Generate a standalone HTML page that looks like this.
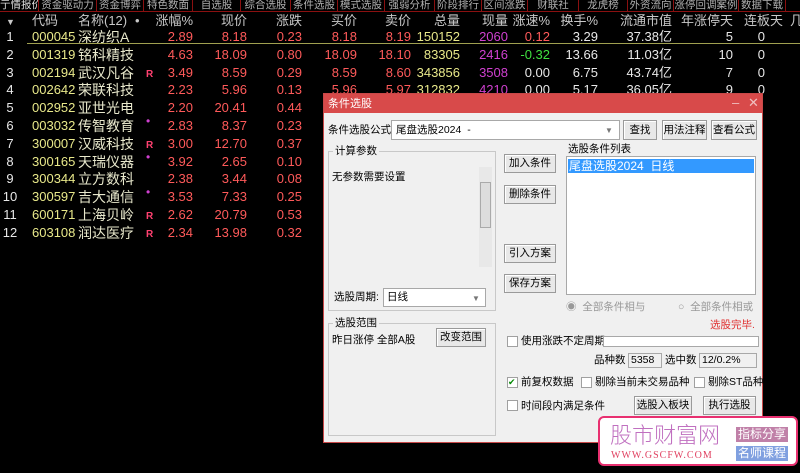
<!DOCTYPE html>
<html><head><meta charset="utf-8"><style>
*{margin:0;padding:0;box-sizing:border-box}
body{width:800px;height:473px;background:#000;overflow:hidden;position:relative;font-family:"Liberation Sans","Noto Sans CJK SC",sans-serif;font-size:13px}
.a{position:absolute;white-space:nowrap;line-height:16px}
.tab{position:absolute;top:0;height:11px;border-right:1px solid #8a1010;color:#b0b0b0;font-size:10.5px;line-height:10px;text-align:center;overflow:hidden;white-space:nowrap}
.h{position:absolute;top:12px;color:#c8c8c8;font-size:13px;line-height:18px;white-space:nowrap}
.r{text-align:right}
.y{color:#e8e88a}.n{color:#e8e8cc}.red{color:#ff5a5a}.w{color:#e8e8e8}.m{color:#d040d0}.g{color:#40e040}
.dlg{position:absolute;left:323px;top:93px;width:440px;height:350px;background:#f0f0f0;border:1px solid #c84848}
.dl{position:absolute;font-size:10.5px;line-height:13px;color:#000;white-space:nowrap}
.btn{position:absolute;background:#e8e8e8;border:1px solid #9a9a9a;box-shadow:inset 1px 1px #fff;font-size:10.5px;text-align:center;color:#000;white-space:nowrap;overflow:hidden}
.box{position:absolute;background:#fff;border:1px solid #a8a8a8}
.grp{position:absolute;border:1px solid #c8c8c8}
.cb{position:absolute;width:11px;height:11px;border:1px solid #a0a0a0;background:#fff}
</style></head><body>
<div class="tab" style="left:0;width:39px;color:#ddd">亍情报价</div>
<div class="tab" style="left:39px;width:58px">资金驱动力</div>
<div class="tab" style="left:97px;width:47px">资金博弈</div>
<div class="tab" style="left:144px;width:49px">特色数面</div>
<div class="tab" style="left:193px;width:48px">自选股</div>
<div class="tab" style="left:241px;width:50px">综合选股</div>
<div class="tab" style="left:291px;width:47px">条件选股</div>
<div class="tab" style="left:338px;width:47px">模式选股</div>
<div class="tab" style="left:385px;width:50px">强弱分析</div>
<div class="tab" style="left:435px;width:47px">阶段排行</div>
<div class="tab" style="left:482px;width:46px">区间涨跌</div>
<div class="tab" style="left:528px;width:51px">财联社</div>
<div class="tab" style="left:579px;width:49px">龙虎榜</div>
<div class="tab" style="left:628px;width:46px">外资流向</div>
<div class="tab" style="left:674px;width:65px">涨停回调案例</div>
<div class="tab" style="left:739px;width:47px">数据下载</div>
<div class="a" style="left:0;top:11px;width:800px;height:1px;background:#8a1010"></div>

<div class="h" style="left:6px;font-size:9px;top:13px">▼</div>
<div class="h" style="left:32px">代码</div>
<div class="h" style="left:78px">名称(12)</div>
<div class="h" style="left:135px">•</div>
<div class="h r" style="left:140px;width:53px">涨幅%</div>
<div class="h r" style="left:200px;width:47px">现价</div>
<div class="h r" style="left:255px;width:47px">涨跌</div>
<div class="h r" style="left:310px;width:47px">买价</div>
<div class="h r" style="left:364px;width:47px">卖价</div>
<div class="h r" style="left:413px;width:47px">总量</div>
<div class="h r" style="left:461px;width:47px">现量</div>
<div class="h r" style="left:500px;width:50px">涨速%</div>
<div class="h r" style="left:548px;width:50px">换手%</div>
<div class="h r" style="left:600px;width:72px">流通市值</div>
<div class="h r" style="left:670px;width:63px">年涨停天</div>
<div class="h r" style="left:735px;width:48px">连板天</div>
<div class="h" style="left:790px">几</div>
<div class="a" style="left:27px;top:43px;width:773px;height:1px;background:#a0a050"></div>

<div id="rows"></div>
<script>
var d=[["000045","深纺织A","","2.89","8.18","0.23","8.18","8.19","150152","2060","0.12","3.29","37.38","5","0"],
["001319","铭科精技","","4.63","18.09","0.80","18.09","18.10","83305","2416","-0.32","13.66","11.03","10","0"],
["002194","武汉凡谷","R","3.49","8.59","0.29","8.59","8.60","343856","3508","0.00","6.75","43.74","7","0"],
["002642","荣联科技","","2.23","5.96","0.13","5.96","5.97","312832","4210","0.00","5.17","36.05","9","0"],
["002952","亚世光电","","2.20","20.41","0.44"],["003032","传智教育","•","2.83","8.37","0.23"],
["300007","汉威科技","R","3.00","12.70","0.37"],["300165","天瑞仪器","•","3.92","2.65","0.10"],
["300344","立方数科","","2.38","3.44","0.08"],["300597","吉大通信","•","3.53","7.33","0.25"],
["600171","上海贝岭","R","2.62","20.79","0.53"],["603108","润达医疗","R","2.34","13.98","0.32"]];
var h="";
d.forEach(function(r,i){var t=29+i*17.8;
function c(l,w,cls,s,al,fs){h+='<div class="a '+cls+'" style="left:'+l+'px;top:'+t+'px;width:'+w+'px;text-align:'+(al||'right')+(fs?';font-size:'+fs+'px':'')+'">'+s+'</div>';}
c(0,20,'w',i+1,'center');c(32,40,'y',r[0],'left');c(78,65,'n',r[1],'left',14);
if(r[2]=="R")h+='<div class="a m" style="left:146px;top:'+(t+2)+'px;font-size:10px;font-weight:bold;color:#ff4070">R</div>';
if(r[2]=="•")h+='<div class="a m" style="left:146px;top:'+(t-5)+'px;font-size:12px">•</div>';
c(140,53,'red',r[3]);c(200,47,'red',r[4]);c(255,47,'red',r[5]);
if(r.length>6){c(310,47,'red',r[6]);c(364,47,'red',r[7]);c(413,47,'y',r[8]);c(461,47,'m',r[9]);
c(500,50,r[10][0]=="-"?'g':(r[10]=="0.12"?'red':'w'),r[10]);c(548,50,'w',r[11]);c(600,72,'w',r[12]+'亿');c(670,63,'w',r[13]);c(735,30,'w',r[14]);}
});
document.getElementById("rows").innerHTML=h;
</script>

<div class="dlg">
<div class="a" style="left:0;top:0;width:438px;height:19px;background:#d84a4a"></div>
<div class="a" style="left:4px;top:2px;color:#fff;font-size:11px">条件选股</div>
<div class="a" style="left:408px;top:1px;color:#f0c0c0;font-size:13px">–</div>
<div class="a" style="left:424px;top:1px;color:#f0c0c0;font-size:13px">✕</div>
<div class="dl" style="left:4px;top:30px">条件选股公式</div>
<div class="box" style="left:67px;top:26px;width:229px;height:20px"><span class="dl" style="left:4px;top:3px">尾盘选股2024 &nbsp;-</span><span class="dl" style="left:213px;top:3px;color:#777;font-size:8px">▼</span></div>
<div class="btn" style="left:299px;top:26px;width:34px;height:20px;line-height:18px">查找</div>
<div class="btn" style="left:338px;top:26px;width:45px;height:20px;line-height:18px">用法注释</div>
<div class="btn" style="left:387px;top:26px;width:46px;height:20px;line-height:18px">查看公式</div>
<div class="grp" style="left:4px;top:57px;width:168px;height:160px"></div>
<div class="dl" style="left:9px;top:51px;background:#f0f0f0;padding:0 2px">计算参数</div>
<div class="dl" style="left:8px;top:77px">无参数需要设置</div>
<div class="a" style="left:155px;top:73px;width:13px;height:100px;background:#e8e8e8"></div>
<div class="a" style="left:156px;top:88px;width:11px;height:46px;background:#ddd;border:1px solid #aaa"></div>
<div class="btn" style="left:180px;top:60px;width:52px;height:19px;line-height:17px">加入条件</div>
<div class="btn" style="left:180px;top:91px;width:52px;height:19px;line-height:17px">删除条件</div>
<div class="btn" style="left:180px;top:150px;width:52px;height:19px;line-height:17px">引入方案</div>
<div class="btn" style="left:180px;top:180px;width:52px;height:19px;line-height:17px">保存方案</div>
<div class="dl" style="left:244px;top:49px">选股条件列表</div>
<div class="box" style="left:242px;top:62px;width:190px;height:139px"></div>
<div class="a" style="left:244px;top:65px;width:186px;height:14px;background:#3399ff;color:#fff;font-size:12px;line-height:14px;padding-left:1px">尾盘选股2024 &nbsp;日线</div>
<div class="dl" style="left:10px;top:197px">选股周期:</div>
<div class="box" style="left:59px;top:194px;width:103px;height:19px"><span class="dl" style="left:3px;top:2px">日线</span><span class="dl" style="left:88px;top:3px;color:#777;font-size:8px">▼</span></div>
<div class="dl" style="left:242px;top:207px;color:#999">◉ &nbsp;全部条件相与</div>
<div class="dl" style="left:354px;top:207px;color:#999">○ &nbsp;全部条件相或</div>
<div class="dl" style="left:386px;top:225px;color:#e03030">选股完毕.</div>
<div class="grp" style="left:4px;top:229px;width:168px;height:113px"></div>
<div class="dl" style="left:9px;top:223px;background:#f0f0f0;padding:0 2px">选股范围</div>
<div class="dl" style="left:8px;top:240px">昨日涨停 全部A股</div>
<div class="btn" style="left:112px;top:234px;width:50px;height:19px;line-height:17px">改变范围</div>
<div class="cb" style="left:183px;top:242px"></div>
<div class="dl" style="left:197px;top:241px">使用涨跌不定周期</div>
<div class="box" style="left:279px;top:242px;width:156px;height:11px"></div>
<div class="dl" style="left:270px;top:260px">品种数</div>
<div class="box" style="left:304px;top:259px;width:34px;height:15px;background:#f0f0f0"><span class="dl" style="left:2px;top:0">5358</span></div>
<div class="dl" style="left:341px;top:260px">选中数</div>
<div class="box" style="left:375px;top:259px;width:58px;height:15px;background:#f0f0f0"><span class="dl" style="left:2px;top:0">12/0.2%</span></div>
<div class="cb" style="left:183px;top:283px;color:#080;font-size:9px;line-height:9px">✔</div>
<div class="dl" style="left:197px;top:282px">前复权数据</div>
<div class="cb" style="left:257px;top:283px"></div>
<div class="dl" style="left:271px;top:282px">剔除当前未交易品种</div>
<div class="cb" style="left:370px;top:283px"></div>
<div class="dl" style="left:384px;top:282px">剔除ST品种</div>
<div class="cb" style="left:183px;top:306px"></div>
<div class="dl" style="left:197px;top:306px">时间段内满足条件</div>
<div class="btn" style="left:310px;top:302px;width:58px;height:19px;line-height:17px">选股入板块</div>
<div class="btn" style="left:379px;top:302px;width:53px;height:19px;line-height:17px">执行选股</div>
</div>

<div class="a" style="left:598px;top:416px;width:200px;height:50px;background:#fff;border:2px solid #e83070;border-radius:6px"></div>
<div class="a" style="left:610px;top:421px;font-size:22px;line-height:26px;color:#c070c0;font-family:'Noto Sans CJK SC',sans-serif;font-weight:300">股市财富网</div>
<div class="a" style="left:611px;top:448px;font-size:10px;color:#e04060;font-family:'Liberation Serif',serif;letter-spacing:1px">WWW.GSCFW.COM</div>
<div class="a" style="left:736px;top:427px;width:52px;height:15px;background:#c080a8;color:#fff;font-size:12px;line-height:15px;text-align:center">指标分享</div>
<div class="a" style="left:736px;top:446px;width:52px;height:15px;background:#80a0e0;color:#fff;font-size:12px;line-height:15px;text-align:center">名师课程</div>
</body></html>
